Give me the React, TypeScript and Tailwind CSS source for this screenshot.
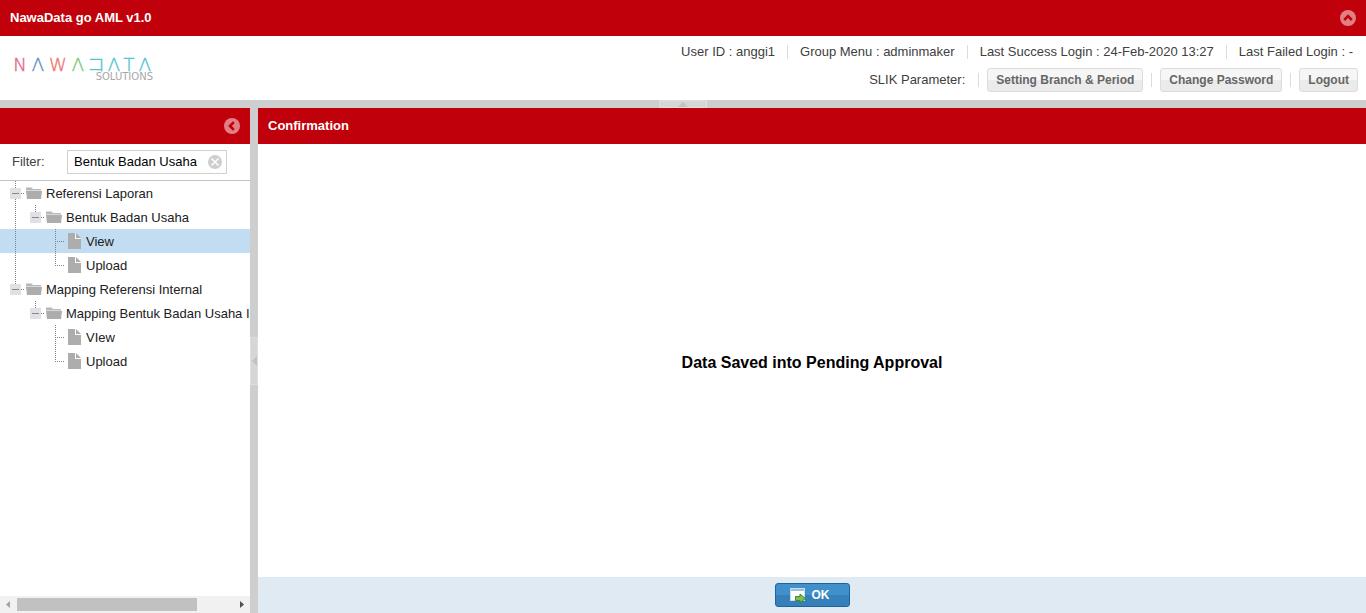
import { useState } from "react";

type Guide = "line" | "tee" | "end" | "blank";

interface TreeItem {
  label: string;
  guides: Guide[];
  folder: boolean;
  selected?: boolean;
}

const items: TreeItem[] = [
  { label: "Referensi Laporan", guides: ["tee"], folder: true },
  { label: "Bentuk Badan Usaha", guides: ["line", "end"], folder: true },
  { label: "View", guides: ["line", "blank", "tee"], folder: false, selected: true },
  { label: "Upload", guides: ["line", "blank", "end"], folder: false },
  { label: "Mapping Referensi Internal", guides: ["end"], folder: true },
  { label: "Mapping Bentuk Badan Usaha Internal", guides: ["blank", "end"], folder: true },
  { label: "VIew", guides: ["blank", "blank", "tee"], folder: false },
  { label: "Upload", guides: ["blank", "blank", "end"], folder: false },
];

function GuideCell({ kind, expander }: { kind: Guide; expander: boolean }) {
  return (
    <svg width="20" height="24" viewBox="0 0 20 24" className="shrink-0" aria-hidden="true">
      {kind !== "blank" && (
        <path
          d={kind === "end" ? "M9.5 0V13" : "M9.5 0V24"}
          stroke="#808080"
          strokeDasharray="1 1"
          fill="none"
        />
      )}
      {(kind === "tee" || kind === "end") && (
        <path d="M9 12.5H18" stroke="#808080" strokeDasharray="1 1" fill="none" />
      )}
      {expander && (
        <>
          <rect x="4" y="7" width="11" height="11" fill="#dfe1e6" />
          <path d="M6 12.5H13" stroke="#888" />
        </>
      )}
    </svg>
  );
}

function FolderIcon() {
  return (
    <svg width="16" height="24" viewBox="0 0 16 24" className="shrink-0" aria-hidden="true">
      <path d="M0 6.500H5.500L7 8H15V9.500H0Z" fill="#b8b8b8" />
      <path d="M0 10H16L15 18H1Z" fill="#adadad" />
    </svg>
  );
}

function FileIcon() {
  return (
    <svg width="16" height="24" viewBox="0 0 16 24" className="shrink-0" aria-hidden="true">
      <path d="M2 4H9V10H15V20H2Z" fill="#adadad" />
      <path d="M10 4L15 9H10Z" fill="#adadad" />
      <path d="M9 4V10H15L14 9.200H9.800V4.500Z" fill="#fff" />
    </svg>
  );
}

function CircleChevron({ direction }: { direction: "up" | "left" }) {
  return (
    <svg width="16" height="16" viewBox="0 0 16 16" aria-hidden="true">
      <circle cx="8" cy="8" r="8" fill="#e27f84" />
      <path
        d={direction === "up" ? "M4.200 10L8 6.200L11.800 10" : "M9.800 4.200L6 8L9.800 11.800"}
        fill="none"
        stroke="#c0000a"
        strokeWidth="2.600"
      />
    </svg>
  );
}

function Logo() {
  return (
    <svg
      width="144"
      height="28"
      viewBox="0 0 144 28"
      role="img"
      aria-label="NawaData Solutions"
      className="font-['DejaVu_Sans','Noto_Sans_CJK_JP',sans-serif]"
    >
      <g fontSize="18" fontWeight="200" strokeWidth="0.4" textAnchor="middle" opacity="0.8">
        <text x="8" y="17" fill="#dd3c6c" stroke="#dd3c6c">N</text>
        <text x="26" y="17" fill="#3478b4" stroke="#3478b4">Λ</text>
        <text x="46" y="17" fill="#e8554a" stroke="#e8554a">W</text>
        <text x="66" y="17" fill="#5cbc5c" stroke="#5cbc5c">Λ</text>
        <text x="84" y="17" fill="#2fb4ca" stroke="#2fb4ca">コ</text>
        <text x="102" y="17" fill="#2fb4ca" stroke="#2fb4ca">Λ</text>
        <text x="117" y="17" fill="#2fb4ca" stroke="#2fb4ca">T</text>
        <text x="133" y="17" fill="#2fb4ca" stroke="#2fb4ca">Λ</text>
      </g>
      <text x="141" y="26" fontSize="10" fill="#a8a8a8" textAnchor="end">
        SOLUTIONS
      </text>
    </svg>
  );
}

function Separator() {
  return <span className="h-3.5 w-px shrink-0 bg-[#dcdcdc]" />;
}

function ToolButton({ children }: { children: string }) {
  return (
    <button
      type="button"
      className="h-6 rounded-[3px] border border-[#dcdcdc] bg-linear-to-b from-[#f6f6f6] from-50% to-[#ebebeb] to-50% px-2 text-xs font-bold text-[#666]"
    >
      {children}
    </button>
  );
}

export default function App() {
  const [filter, setFilter] = useState("Bentuk Badan Usaha");

  return (
    <div className="flex h-screen flex-col overflow-hidden bg-white font-['Liberation_Sans',Arial,sans-serif] text-[13px] leading-4 text-[#404040]">
      <header className="shrink-0">
        <div className="flex h-9 items-center justify-between bg-[#c0000a] px-2.5 font-bold text-white">
          <h1>NawaData go AML v1.0</h1>
          <button type="button" aria-label="Collapse header">
            <CircleChevron direction="up" />
          </button>
        </div>
        <div className="flex h-16 items-center justify-between pl-3">
          <Logo />
          <div className="flex flex-col items-end gap-1 pr-2 pb-1">
            <div className="flex h-6 items-center gap-3 pr-[5px]">
              <span>User ID : anggi1</span>
              <Separator />
              <span>Group Menu : adminmaker</span>
              <Separator />
              <span>Last Success Login : 24-Feb-2020 13:27</span>
              <Separator />
              <span>Last Failed Login : -</span>
            </div>
            <div className="flex h-6 items-center gap-2">
              <span className="pr-[5px]">SLIK Parameter:</span>
              <Separator />
              <ToolButton>Setting Branch &amp; Period</ToolButton>
              <Separator />
              <ToolButton>Change Password</ToolButton>
              <Separator />
              <ToolButton>Logout</ToolButton>
            </div>
          </div>
        </div>
      </header>

      <div className="flex h-2 shrink-0 justify-center bg-[#cecece]">
        <button
          type="button"
          aria-label="Toggle header"
          className="flex h-2 w-12 items-center justify-center border border-[#dedede] bg-[#d6d6d6]"
        >
          <svg width="10" height="5" viewBox="0 0 10 5" aria-hidden="true">
            <path d="M0 5L5 0L10 5Z" fill="#c2c2c2" />
          </svg>
        </button>
      </div>

      <div className="flex min-h-0 flex-1">
        <aside className="flex w-[250px] shrink-0 flex-col">
          <div className="flex h-9 shrink-0 items-center justify-end bg-[#c0000a] pr-2.5">
            <button type="button" aria-label="Collapse menu">
              <CircleChevron direction="left" />
            </button>
          </div>
          <div className="flex h-[37px] shrink-0 items-center border-b border-[#c4c4c4] pl-3">
            <label htmlFor="filter" className="w-[55px]">
              Filter:
            </label>
            <div className="flex h-6 w-40 items-center border border-[#d0d0d0] pr-1 pl-1.5">
              <input
                id="filter"
                type="text"
                value={filter}
                onChange={(e) => setFilter(e.target.value)}
                className="min-w-0 flex-1 text-black outline-none"
              />
              <button type="button" aria-label="Clear filter" onClick={() => setFilter("")}>
                <svg width="14" height="14" viewBox="0 0 14 14" aria-hidden="true">
                  <circle cx="7" cy="7" r="7" fill="#cecece" />
                  <path d="M3.500 3.500L10.500 10.500M10.500 3.500L3.500 10.500" stroke="#fff" strokeWidth="1.500" />
                </svg>
              </button>
            </div>
          </div>
          <ul className="min-h-0 flex-1 overflow-hidden">
            {items.map((item, i) => (
              <li
                key={i}
                className={
                  item.selected
                    ? "flex h-6 items-center bg-[#c2ddf2] pl-1.5 whitespace-nowrap"
                    : "flex h-6 items-center pl-1.5 whitespace-nowrap"
                }
              >
                {item.guides.map((kind, j) => (
                  <GuideCell
                    key={j}
                    kind={kind}
                    expander={item.folder && j === item.guides.length - 1}
                  />
                ))}
                {item.folder ? <FolderIcon /> : <FileIcon />}
                <a href="#" className="pt-0.5 pl-1 text-[#202020]">
                  {item.label}
                </a>
              </li>
            ))}
          </ul>
          <div className="flex h-[17px] shrink-0 items-center justify-between bg-[#f1f1f1]">
            <svg width="17" height="17" viewBox="0 0 17 17" className="shrink-0" aria-hidden="true">
              <path d="M6 8.500L10 5V12Z" fill="#a3a3a3" />
            </svg>
            <div className="flex h-[13px] flex-1">
              <div className="w-5/6 bg-[#c1c1c1]" />
            </div>
            <svg width="17" height="17" viewBox="0 0 17 17" className="shrink-0" aria-hidden="true">
              <path d="M11 8.500L7 5V12Z" fill="#505050" />
            </svg>
          </div>
        </aside>

        <div className="flex w-2 shrink-0 items-center bg-[#cecece]">
          <button
            type="button"
            aria-label="Toggle menu"
            className="flex h-12 w-2 items-center justify-center border border-[#dedede] bg-[#d6d6d6]"
          >
            <svg width="5" height="10" viewBox="0 0 5 10" aria-hidden="true">
              <path d="M5 0L0 5L5 10Z" fill="#c2c2c2" />
            </svg>
          </button>
        </div>

        <main className="flex min-w-0 flex-1 flex-col">
          <h2 className="flex h-9 shrink-0 items-center bg-[#c0000a] pl-2.5 font-bold text-white">
            Confirmation
          </h2>
          <div className="flex flex-1 items-center justify-center pt-1">
            <p className="text-base font-bold text-black">Data Saved into Pending Approval</p>
          </div>
          <footer className="flex h-9 shrink-0 items-center justify-center bg-[#dfeaf3]">
            <button
              type="button"
              className="flex h-6 w-[75px] items-center gap-1.5 rounded-[3px] border border-[#1d649e] bg-linear-to-b from-[#4090cc] from-50% to-[#3580bb] to-50% pl-3.5 text-xs font-bold text-white"
            >
              <svg width="16" height="16" viewBox="0 0 16 16" aria-hidden="true">
                <rect x="0.500" y="1.500" width="14" height="12" fill="#fff" stroke="#c9dced" />
                <path d="M1 2H14V4H1Z" fill="#9cc0e4" />
                <path d="M5.500 9.500H10V7L15.500 11.500L10 15.700V13.500H5.500Z" fill="#7cbf54" stroke="#3f8a2a" />
              </svg>
              OK
            </button>
          </footer>
        </main>
      </div>
    </div>
  );
}
